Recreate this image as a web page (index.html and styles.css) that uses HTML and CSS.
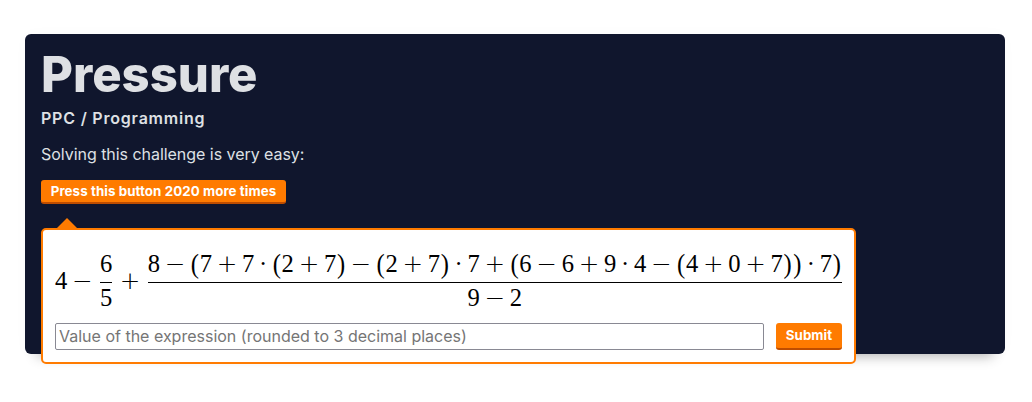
FILE: index.html
```html
<!DOCTYPE html>
<html lang="en">
<head>
<meta charset="utf-8">
<title>Pressure</title>
<link rel="stylesheet" href="styles.css">
</head>
<body>
<main class="card">
  <h1 class="title">Pressure</h1>
  <h2 class="category">PPC / Programming</h2>
  <p class="intro">Solving this challenge is very easy:</p>
  <button class="button press">Press this button 2020 more times</button>
  <form class="popup">
    <div class="formula">
      <span>4</span><b>−</b>
      <div class="fraction"><div class="row"><span>6</span></div><div class="row"><span>5</span></div></div>
      <b>+</b>
      <div class="fraction last">
        <div class="row"><span>8</span><b>−</b><i>(</i><span>7</span><b>+</b><span>7</span><u>·</u><i>(</i><span>2</span><b>+</b><span>7</span><i>)</i><b>−</b><i>(</i><span>2</span><b>+</b><span>7</span><i>)</i><u>·</u><span>7</span><b>+</b><i>(</i><span>6</span><b>−</b><span>6</span><b>+</b><span>9</span><u>·</u><span>4</span><b>−</b><i>(</i><span>4</span><b>+</b><span>0</span><b>+</b><span>7</span><i>)</i><i>)</i><u>·</u><span>7</span><i>)</i></div>
        <div class="row"><span>9</span><b>−</b><span>2</span></div>
      </div>
    </div>
    <div class="answer">
      <input class="field" type="text" placeholder="Value of the expression (rounded to 3 decimal places)">
      <button class="button submit" type="button">Submit</button>
    </div>
  </form>
</main>
</body>
</html>
```
FILE: styles.css
```css
* { box-sizing: border-box; }
body { margin: 0; min-height: 402px; padding: 34px 27px 0 25px; background: #fff; font-family: Inter, "Liberation Sans", sans-serif; }
.card {
  position: relative;
  height: 320px;
  padding: 16px;
  border-radius: 6px;
  background: #10162d;
  color: #dee0e4;
  box-shadow: 0 14px 12px -12px rgba(0, 0, 0, .3), 0 0 16px rgba(0, 0, 0, .02);
}
.title { margin: 0; font-size: 49px; line-height: 50px; height: 48px; font-weight: 800; letter-spacing: 0; }
.category { margin: 8px 0 0; font-size: 16px; line-height: 24px; font-weight: 600; letter-spacing: .8px; }
.intro { margin: 12px 0 14px; font-size: 16px; line-height: 24px; letter-spacing: -.04px; }
.button {
  display: block;
  padding: 0;
  border: 0;
  border-bottom: 2px solid #bf4d00;
  border-radius: 3px;
  background: #ff7b00;
  color: #fff;
  font: 700 13.33px/22px Inter, "Liberation Sans", sans-serif;
  letter-spacing: .07px;
}
.press { width: 245px; height: 24px; }
.popup {
  position: absolute;
  left: 16px;
  top: 194px;
  width: 815px;
  height: 136px;
  padding: 19px 12px 0;
  border: 2px solid #ff7b00;
  border-radius: 5px;
  background: #fff;
  color: #000;
}
.popup::before {
  content: "";
  position: absolute;
  left: 14px;
  top: -12px;
  border: solid transparent;
  border-width: 0 10px 10px;
  border-bottom-color: #ff7b00;
}
.formula {
  display: flex;
  align-items: center;
  height: 66px;
  font: 24.6px/30px "Liberation Serif", serif;
}
.formula > *, .row > * { flex: none; }
.formula > span, .formula > b { padding-bottom: 2px; }
.formula span { width: .5em; text-align: center; }
.formula i { width: .389em; text-align: center; font-style: normal; transform: scaleY(1.1); }
.formula u { width: .722em; text-align: center; text-decoration: none; }
.formula b { width: 1.222em; text-align: center; font-family: "DejaVu Sans", "DejaVu Sans Light", sans-serif; font-weight: 200; }
.fraction { margin: 0 2.7px; }
.fraction.last { margin-right: 0; }
.row { display: flex; justify-content: center; height: 33px; line-height: 28px; }
.fraction .row:first-child { border-bottom: 1px solid #000; }
.fraction .row:last-child { height: 32px; padding-top: 1px; }
.answer { display: flex; gap: 12px; margin-top: 8px; }
.field {
  width: 709px;
  height: 27px;
  padding: 0 3px 2px;
  border: 1px solid #898993;
  border-radius: 2px;
  background: #fff;
  font: 16px Inter, "Liberation Sans", sans-serif;
}
.field::placeholder { color: #757575; }
.submit { width: 66px; height: 27px; line-height: 25px; }
```
